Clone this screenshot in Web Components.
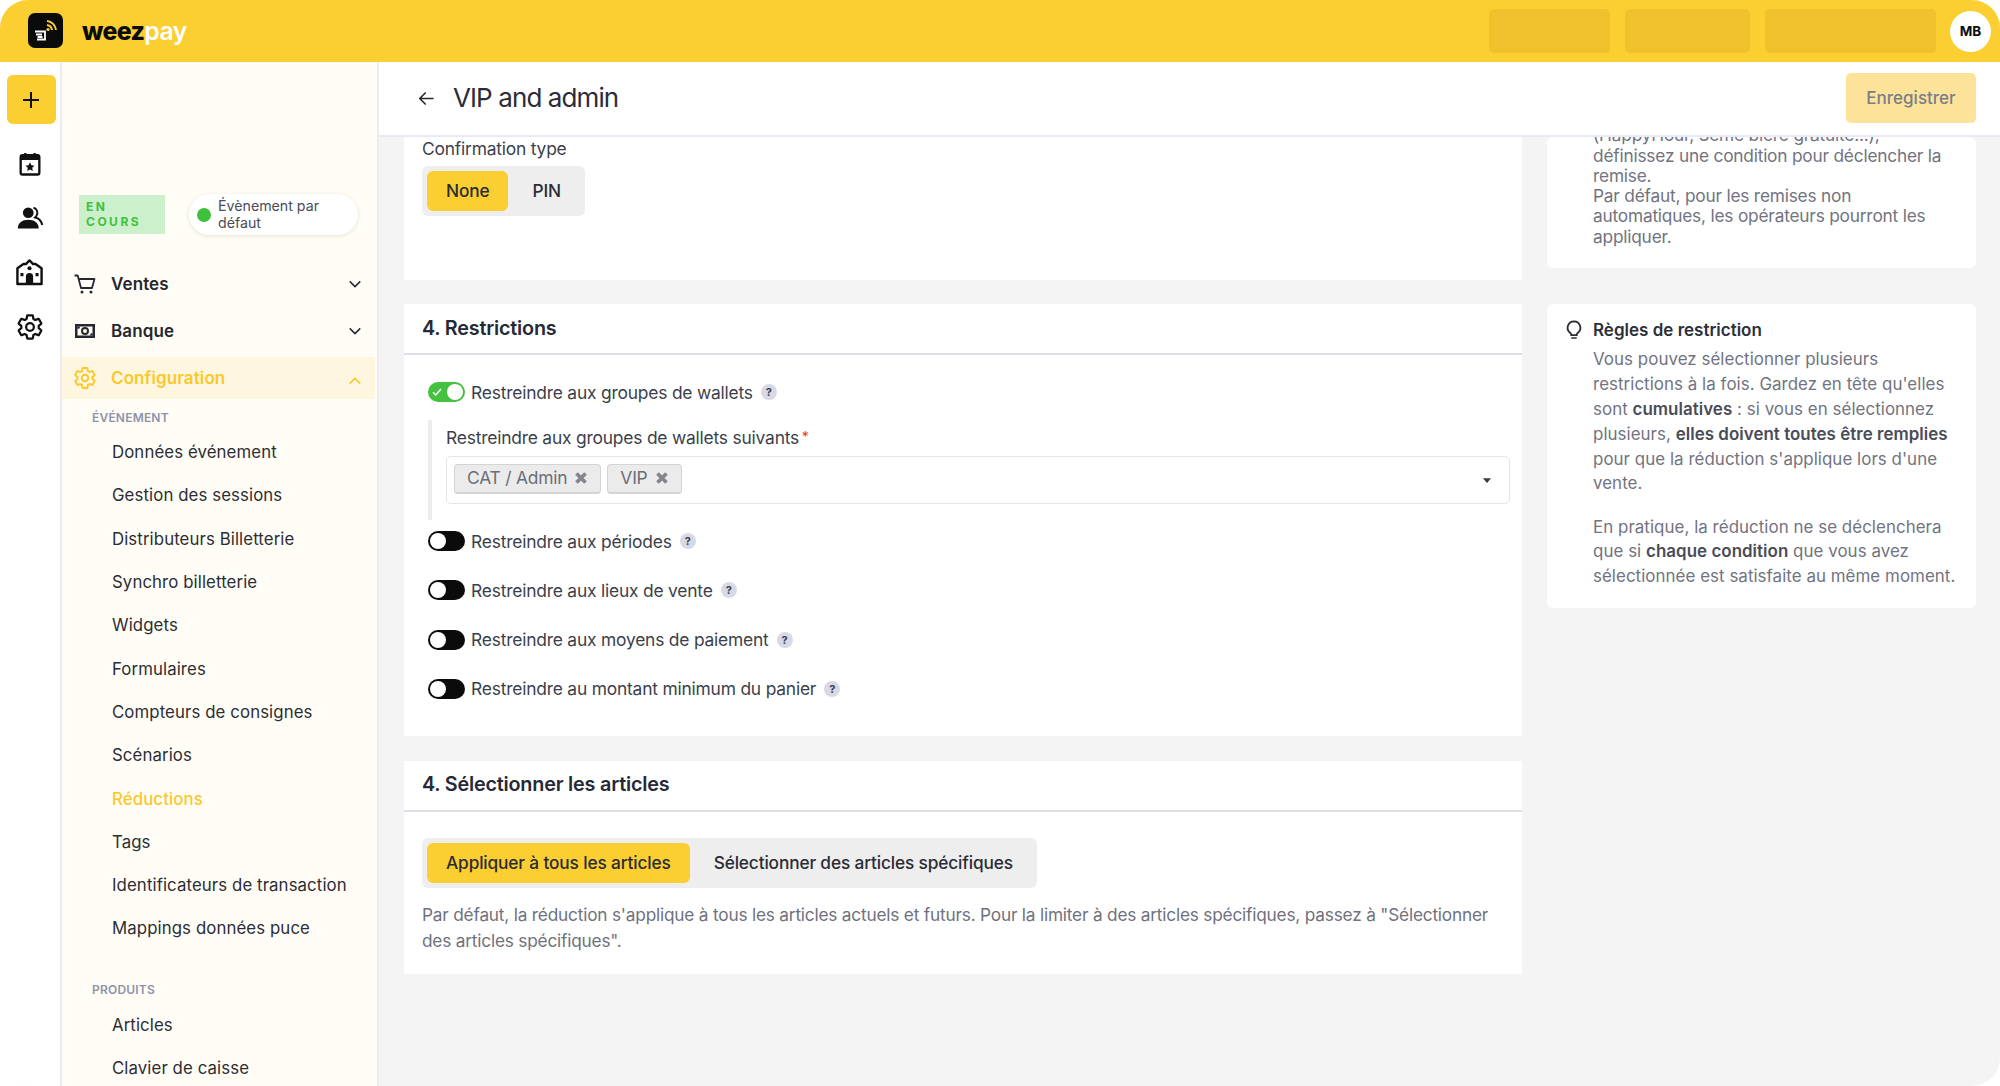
<!DOCTYPE html>
<html lang="fr">
<head>
<meta charset="utf-8">
<title>VIP and admin</title>
<style>
    html, body { margin: 0; padding: 0; background: #fff; }
    body { font-family: Inter, "Liberation Sans", sans-serif; color: #2c2f3a; overflow: hidden; }
</style>
</head>
<body>
<wz-app></wz-app>
<script>
/* weezpay admin: discount form. One file, elements defined top-down. */

const YELLOW = '#fbce32';

const ICONS = {
    plus: '<path d="M12 4v16M4 12h16" fill="none" stroke="currentColor" stroke-width="2"/>',
    calendar: '<rect x="4" y="4.5" width="16" height="16.5" rx="1.5" fill="none" stroke="currentColor" stroke-width="2"/><path d="M4 5h16v3.5H4z" fill="currentColor"/><path d="M8 2.5v3M16 2.5v3" stroke="currentColor" stroke-width="2"/><path d="M12 10.6l1.2 2.5 2.7.3-2 1.9.5 2.7-2.4-1.3-2.4 1.3.5-2.7-2-1.9 2.7-.3z" fill="currentColor"/>',
    people: '<circle cx="10.5" cy="7.5" r="4.6" fill="currentColor"/><path d="M1.5 21c0-5 4-7.5 9-7.5s9 2.5 9 7.5z" fill="currentColor"/><path d="M15 3.2c2.6.7 3.6 3.1 3.2 5.3-.2 1.3-.9 2.2-1.8 3 2.9.6 5.4 3.2 6.1 6.5" fill="none" stroke="currentColor" stroke-width="1.7"/>',
    venue: '<path d="M2 21.5V8.5L7 5h2l3-3 3 3h2l5 3.5v13z" fill="none" stroke="currentColor" stroke-width="2" stroke-linejoin="round"/><circle cx="12" cy="8.5" r="1.7" fill="currentColor"/><path d="M9 21.5v-6a3 3 0 0 1 6 0v6zM4.5 12.5H7V15H4.5zM17 12.5h2.5V15H17z" fill="currentColor"/>',
    gear: '<path d="M19.43 12.98c.04-.32.07-.64.07-.98s-.03-.66-.07-.98l2.11-1.65c.19-.15.24-.42.12-.64l-2-3.46c-.12-.22-.39-.3-.61-.22l-2.49 1c-.52-.4-1.08-.73-1.69-.98l-.38-2.65C14.46 2.18 14.25 2 14 2h-4c-.25 0-.46.18-.49.42l-.38 2.65c-.61.25-1.17.59-1.69.98l-2.49-1c-.23-.09-.49 0-.61.22l-2 3.46c-.13.22-.07.49.12.64l2.11 1.65c-.04.32-.07.65-.07.98s.03.66.07.98l-2.11 1.65c-.19.15-.24.42-.12.64l2 3.46c.12.22.39.3.61.22l2.49-1c.52.4 1.08.73 1.69.98l.38 2.65c.03.24.24.42.49.42h4c.25 0 .46-.18.49-.42l.38-2.65c.61-.25 1.17-.59 1.69-.98l2.49 1c.23.09.49 0 .61-.22l2-3.46c.12-.22.07-.49-.12-.64l-2.11-1.65z" fill="none" stroke="currentColor" stroke-width="1.9" stroke-linejoin="round"/><circle cx="12" cy="12" r="3.3" fill="none" stroke="currentColor" stroke-width="1.9"/>',
    cart: '<path d="M1.5 3.5h3.2L8 16h11l2.5-9H6" fill="none" stroke="currentColor" stroke-width="1.8" stroke-linejoin="round"/><circle cx="9" cy="20" r="1.5" fill="currentColor"/><circle cx="18" cy="20" r="1.5" fill="currentColor"/>',
    money: '<path d="M2 5h20v14H2z" fill="currentColor"/><path d="M4.5 7.5h15v9h-15z" fill="#fffdf5"/><circle cx="12" cy="12" r="3" fill="none" stroke="currentColor" stroke-width="2"/><path d="M4.5 7.5H7A2.5 2.5 0 0 1 4.5 10zM19.5 16.5H17a2.5 2.5 0 0 1 2.5-2.5z" fill="currentColor"/>',
    down: '<path d="M5 8.5l7 7 7-7" fill="none" stroke="currentColor" stroke-width="2"/>',
    up: '<path d="M5 15.5l7-7 7 7" fill="none" stroke="currentColor" stroke-width="2"/>',
    back: '<path d="M21 12H4M11 4.5L3.5 12l7.5 7.5" fill="none" stroke="currentColor" stroke-width="2"/>',
    bulb: '<path d="M12 2.5a7 7 0 0 0-4 12.7c.6.5 1 1.2 1 2v.3h6v-.3c0-.8.4-1.5 1-2a7 7 0 0 0-4-12.7z" fill="none" stroke="currentColor" stroke-width="2"/><path d="M9 20h6v1.5H9z" fill="currentColor"/>',
    cross: '<path d="M6 6l12 12M18 6L6 18" fill="none" stroke="currentColor" stroke-width="5"/>',
    caret: '<path d="M5 9h14l-7 8z" fill="currentColor"/>',
    check: '<path d="M4 12.5l5.5 5.5L20 6" fill="none" stroke="currentColor" stroke-width="3"/>',
};

class WzIcon extends HTMLElement {
    connectedCallback() {
        const size = this.getAttribute('size') || 24;
        this.attachShadow({ mode: 'open' }).innerHTML = `
            <style>:host { display: inline-flex; flex: none; width: ${size}px; height: ${size}px; } svg { width: 100%; height: 100%; display: block; }</style>
            <svg viewBox="0 0 24 24">${ICONS[this.getAttribute('name')]}</svg>`;
    }
}
customElements.define('wz-icon', WzIcon);

class WzTopbar extends HTMLElement {
    constructor() {
        super();
        this.attachShadow({ mode: 'open' }).innerHTML = `
            <style>
                :host { display: flex; align-items: center; height: 62px; flex: none; background: ${YELLOW}; padding: 0 9px 0 28px; box-sizing: border-box; }
                .logo { width: 35px; height: 35px; margin-top: -1px; border-radius: 7px; background: #0b0b0b; display: block; flex: none; }
                .brand { margin-left: 19px; font: 800 24.8px Inter, sans-serif; letter-spacing: -.6px; color: #0b0b0b; }
                .brand span { color: #fff; font-weight: 600; }
                .gap { flex: 1; }
                .ghost { height: 44px; border-radius: 5px; background: #f0c12d; margin-right: 15px; flex: none; }
                .avatar { width: 41px; height: 41px; margin-left: -1px; border-radius: 50%; background: #fff; color: #0b0b0b; font: 700 13.5px Inter, sans-serif; display: flex; align-items: center; justify-content: center; }
            </style>
            <svg class="logo" viewBox="0 0 35 35">
                <g fill="none" stroke="${YELLOW}" stroke-width="2">
                    <path d="M19 12a6 6 0 0 1 5 5"/><path d="M19 8a10 10 0 0 1 9 9"/>
                </g>
                <circle cx="20" cy="16.5" r="1.6" fill="${YELLOW}"/>
                <g fill="none" stroke="#fff" stroke-width="1.8">
                    <path d="M7 18.5h10v8H9M8 21.5h6M9.5 24h5"/>
                </g>
            </svg>
            <div class="brand">weez<span>pay</span></div>
            <div class="gap"></div>
            <div class="ghost" style="width:121px"></div>
            <div class="ghost" style="width:125px"></div>
            <div class="ghost" style="width:171px"></div>
            <div class="avatar">MB</div>`;
    }
}
customElements.define('wz-topbar', WzTopbar);

class WzRail extends HTMLElement {
    constructor() {
        super();
        this.attachShadow({ mode: 'open' }).innerHTML = `
            <style>
                :host { display: flex; flex-direction: column; align-items: center; width: 62px; flex: none; box-sizing: border-box; border-right: 2px solid #ecebee; padding-top: 13px; background: #fff; color: #111; }
                .add { width: 49px; height: 49px; border-radius: 6px; background: ${YELLOW}; display: flex; align-items: center; justify-content: center; margin: 0 -1px 26px 1px; }
                wz-icon { margin-bottom: 26px; margin-right: 1px; }
            </style>
            <div class="add"><wz-icon name="plus" size="24" style="margin:0"></wz-icon></div>
            <wz-icon name="calendar" size="28"></wz-icon>
            <wz-icon name="people" size="28"></wz-icon>
            <wz-icon name="venue" size="29"></wz-icon>
            <wz-icon name="gear" size="28"></wz-icon>`;
    }
}
customElements.define('wz-rail', WzRail);

class WzNavGroup extends HTMLElement {
    connectedCallback() {
        const active = this.hasAttribute('active');
        this.attachShadow({ mode: 'open' }).innerHTML = `
            <style>
                :host { display: flex; align-items: center; height: 42px; margin-right: 2px; padding: 0 11px 0 11px; box-sizing: border-box; font: 600 17px Inter, sans-serif; letter-spacing: .1px; color: ${active ? '#fbc82a' : '#26272f'}; background: ${active ? '#fff6e0' : 'transparent'}; }
                .label { margin-left: 14px; flex: 1; }
            </style>
            <wz-icon name="${this.getAttribute('icon')}" size="24"></wz-icon>
            <span class="label"><slot></slot></span>
            <wz-icon name="${active ? 'up' : 'down'}" size="18" style="${active ? 'margin-top:5px' : ''}"></wz-icon>`;
    }
}
customElements.define('wz-nav-group', WzNavGroup);

class WzNavLink extends HTMLElement {
    connectedCallback() {
        const on = this.hasAttribute('active');
        this.attachShadow({ mode: 'open' }).innerHTML = `
            <style>
                :host { display: flex; align-items: center; height: 43.3px; padding-left: 50px; font: ${on ? 500 : 400} 16.8px Inter, sans-serif; letter-spacing: .1px; color: ${on ? '#fbc82a' : '#2b2d36'}; }
            </style>
            <slot></slot>`;
    }
}
customElements.define('wz-nav-link', WzNavLink);

class WzNavTitle extends HTMLElement {
    constructor() {
        super();
        this.attachShadow({ mode: 'open' }).innerHTML = `
            <style>:host { display: block; padding-left: 30px; font: 600 12px/16px Inter, sans-serif; color: #8f92aa; letter-spacing: .2px; text-transform: uppercase; }</style>
            <slot></slot>`;
    }
}
customElements.define('wz-nav-title', WzNavTitle);

class WzSidebar extends HTMLElement {
    constructor() {
        super();
        this.attachShadow({ mode: 'open' }).innerHTML = `
            <style>
                :host { display: flex; flex-direction: column; width: 317px; flex: none; box-sizing: border-box; background: #fffdf5; border-right: 2px solid #ecebee; overflow: hidden; position: relative; }
                .status { display: flex; align-items: center; gap: 24px; margin: 132px 0 0 17px; height: 41px; }
                .badge { width: 86px; height: 39px; box-sizing: border-box; background: #cbf0cb; color: #3fc13b; font: 700 12px/15px Inter, sans-serif; letter-spacing: 2.5px; padding: 4px 7px; flex: none; }
                .chip { width: 169px; height: 41px; box-sizing: border-box; background: #fff; border-radius: 21px; box-shadow: 0 1px 4px rgba(70,60,20,.14); display: flex; align-items: center; gap: 7px; padding: 0 8px; font: 400 14.2px/16.5px Inter, sans-serif; color: #4a4c57; }
                .dot { width: 14px; height: 14px; border-radius: 50%; background: #3fc13b; flex: none; }
                .groups { margin-top: 28px; display: flex; flex-direction: column; gap: 5px; }
                .scroll { position: absolute; top: 0; right: -2px; width: 2px; height: 541px; background: #a9a9ae; }
                hr { border: 0; height: 2px; background: #dcdce6; margin: 4px 12px 28px 30px; }
            </style>
            <div class="status">
                <div class="badge">EN COURS</div>
                <div class="chip"><span class="dot"></span><span>Évènement par défaut</span></div>
            </div>
            <div class="groups">
                <wz-nav-group icon="cart">Ventes</wz-nav-group>
                <wz-nav-group icon="money">Banque</wz-nav-group>
                <wz-nav-group icon="gear" active>Configuration</wz-nav-group>
            </div>
            <wz-nav-title style="margin-top:10.5px">Événement</wz-nav-title>
            <div style="margin-top:5px">
                <wz-nav-link>Données événement</wz-nav-link>
                <wz-nav-link>Gestion des sessions</wz-nav-link>
                <wz-nav-link>Distributeurs Billetterie</wz-nav-link>
                <wz-nav-link>Synchro billetterie</wz-nav-link>
                <wz-nav-link>Widgets</wz-nav-link>
                <wz-nav-link>Formulaires</wz-nav-link>
                <wz-nav-link>Compteurs de consignes</wz-nav-link>
                <wz-nav-link>Scénarios</wz-nav-link>
                <wz-nav-link active>Réductions</wz-nav-link>
                <wz-nav-link>Tags</wz-nav-link>
                <wz-nav-link>Identificateurs de transaction</wz-nav-link>
                <wz-nav-link>Mappings données puce</wz-nav-link>
            </div>
            <hr>
            <wz-nav-title>Produits</wz-nav-title>
            <div style="margin-top:5px">
                <wz-nav-link>Articles</wz-nav-link>
                <wz-nav-link>Clavier de caisse</wz-nav-link>
            </div>
            <div class="scroll"></div>`;
    }
}
customElements.define('wz-sidebar', WzSidebar);

class WzPageHeader extends HTMLElement {
    connectedCallback() {
        this.attachShadow({ mode: 'open' }).innerHTML = `
            <style>
                :host { display: flex; align-items: center; height: 75px; flex: none; box-sizing: border-box; background: #fff; border-bottom: 2px solid #e9e9f6; padding: 0 24px 0 38px; position: relative; z-index: 1; }
                h1 { margin: 0 0 2px 17px; font: 400 26px Inter, sans-serif; letter-spacing: -.9px; color: #2a2d38; flex: 1; }
                button { width: 130px; height: 50px; margin-top: -1px; border: 0; border-radius: 5px; background: #fde39a; font: 500 17px Inter, sans-serif; color: #7a7d88; }
                wz-icon { color: #26272f; }
            </style>
            <wz-icon name="back" size="19"></wz-icon>
            <h1>${this.getAttribute('title')}</h1>
            <button>Enregistrer</button>`;
    }
}
customElements.define('wz-page-header', WzPageHeader);

class WzCard extends HTMLElement {
    connectedCallback() {
        const heading = this.getAttribute('heading');
        this.attachShadow({ mode: 'open' }).innerHTML = `
            <style>
                :host { display: block; background: #fff; flex: none; }
                header { height: 51px; box-sizing: border-box; border-bottom: 2px solid #dedeea; padding: 0 18px 2px; display: flex; align-items: center; font: 600 19.8px Inter, sans-serif; letter-spacing: -.2px; color: #262936; }
            </style>
            ${heading ? `<header>${heading}</header>` : ''}
            <slot></slot>`;
    }
}
customElements.define('wz-card', WzCard);

class WzSegmented extends HTMLElement {
    connectedCallback() {
        const options = this.getAttribute('options').split('|');
        this.attachShadow({ mode: 'open' }).innerHTML = `
            <style>
                :host { display: inline-flex; height: 50px; box-sizing: border-box; padding: 5px; gap: 5px; border-radius: 6px; background: #eeeeef; }
                span { display: flex; align-items: center; padding: 0 19px 1px; border-radius: 6px; font: 500 17.3px Inter, sans-serif; letter-spacing: -.15px; color: #2a2c35; }
                span.on { background: ${YELLOW}; }
            </style>
            ${options.map((o, i) => `<span class="${i === 0 ? 'on' : ''}">${o}</span>`).join('')}`;
    }
}
customElements.define('wz-segmented', WzSegmented);

class WzHelp extends HTMLElement {
    constructor() {
        super();
        this.attachShadow({ mode: 'open' }).innerHTML = `
            <style>:host { display: inline-flex; align-items: center; justify-content: center; width: 16px; height: 16px; border-radius: 50%; background: #d8d9e6; font: 700 11px Inter, sans-serif; color: #3b3d4c; flex: none; }</style>
            ?`;
    }
}
customElements.define('wz-help', WzHelp);

class WzToggle extends HTMLElement {
    connectedCallback() {
        const on = this.hasAttribute('on');
        this.attachShadow({ mode: 'open' }).innerHTML = `
            <style>
                :host { display: flex; align-items: center; font: 400 17.4px Inter, sans-serif; letter-spacing: -.2px; color: #3c3f4b; }
                .track { width: 37px; height: 20px; box-sizing: border-box; border-radius: 10px; background: ${on ? '#44c23f' : '#0b0b0b'}; display: flex; align-items: center; justify-content: ${on ? 'flex-end' : 'flex-start'}; padding: 0 2px; margin-right: 6px; position: relative; color: #fff; flex: none; }
                .knob { width: 16px; height: 16px; border-radius: 50%; background: #fff; }
                wz-icon { position: absolute; left: 3px; top: 4px; }
                wz-help { margin-left: 8px; }
            </style>
            <span class="track">${on ? '<wz-icon name="check" size="12"></wz-icon>' : ''}<span class="knob"></span></span>
            <span><slot></slot></span>
            <wz-help></wz-help>`;
    }
}
customElements.define('wz-toggle', WzToggle);

class WzTag extends HTMLElement {
    constructor() {
        super();
        this.attachShadow({ mode: 'open' }).innerHTML = `
            <style>
                :host { display: inline-flex; align-items: center; height: 30px; margin-top: -3px; box-sizing: border-box; padding: 0 10px 1px 12px; gap: 5px; border: 1px solid #d4d4d6; border-bottom-width: 2px; border-radius: 4px; background: #ebebec; font: 400 17.4px Inter, sans-serif; letter-spacing: -.2px; color: #6c6e76; }
                wz-icon { color: #85868c; }
            </style>
            <slot></slot><wz-icon name="cross" size="18"></wz-icon>`;
    }
}
customElements.define('wz-tag', WzTag);

class WzSelect extends HTMLElement {
    constructor() {
        super();
        this.attachShadow({ mode: 'open' }).innerHTML = `
            <style>
                :host { display: flex; align-items: center; height: 48px; box-sizing: border-box; padding: 0 15px 0 7px; gap: 6px; border: 1px solid #e4e4ea; border-radius: 5px; background: #fff; }
                .sp { flex: 1; }
                wz-icon { color: #3a3a40; }
            </style>
            <slot></slot><span class="sp"></span><wz-icon name="caret" size="14"></wz-icon>`;
    }
}
customElements.define('wz-select', WzSelect);

class WzTip extends HTMLElement {
    connectedCallback() {
        const title = this.getAttribute('heading');
        this.attachShadow({ mode: 'open' }).innerHTML = `
            <style>
                :host { display: flex; flex-direction: column; justify-content: flex-end; overflow: hidden; background: #fff; border-radius: 6px; box-sizing: border-box; padding: 0 20px ${title ? 19 : 21}px 46px; position: relative; flex: none; font: 400 17.3px/20.3px Inter, sans-serif; letter-spacing: -.2px; color: #71737f; }
                h4 { margin: 0 0 5px; font: 600 17px/24px Inter, sans-serif; letter-spacing: 0; color: #2d2f3a; }
                wz-icon { position: absolute; left: 16px; top: 15px; color: #2a2c35; }
            </style>
            ${title ? `<wz-icon name="bulb" size="22"></wz-icon><h4>${title}</h4>` : ''}
            <div><slot></slot></div>`;
    }
}
customElements.define('wz-tip', WzTip);

class WzApp extends HTMLElement {
    constructor() {
        super();
        this.attachShadow({ mode: 'open' }).innerHTML = `
            <style>
                :host { display: flex; flex-direction: column; width: 2000px; height: 1086px; overflow: hidden; border-radius: 28px; background: #f4f4f5; }
                .shell { flex: 1; display: flex; min-height: 0; }
                main { flex: 1; display: flex; flex-direction: column; min-width: 0; }
                .scroller { flex: 1; display: flex; gap: 25px; padding: 0 24px 0 25px; min-height: 0; overflow: hidden; }
                .left { width: 1118px; flex: none; display: flex; flex-direction: column; gap: 24.5px; }
                .right { flex: 1; display: flex; flex-direction: column; gap: 36px; }
                .pad { padding: 0 18px; }
                label { display: block; font: 400 17.4px/24px Inter, sans-serif; letter-spacing: -.2px; color: #3c3f4b; }
                .first { height: 142.5px; box-sizing: border-box; }
                .first wz-segmented { margin-top: 5px; }
                .rows { padding: 27px 12px 0 24px; height: 381px; box-sizing: border-box; display: flex; flex-direction: column; }
                .nested { margin: 18px 0 11px; border-left: 4px solid #ededee; padding: 5px 0 16px 14px; }
                .nested label { margin-bottom: 6px; }
                .nested i { color: #e8323c; font-style: normal; font-size: 14px; vertical-align: 2px; margin-left: -2px; }
                .rows wz-toggle { height: 20px; margin-bottom: 29.3px; }
                .rows wz-toggle.lead { margin-bottom: 0; }
                .articles { padding: 26px 18px 0; height: 162px; box-sizing: border-box; }
                .articles p { margin: 14.5px 0 0; font: 400 17.25px/25.5px Inter, sans-serif; letter-spacing: -.2px; color: #6f717d; }
                b { font-weight: 600; color: #4a4c58; }
                .r2 { line-height: 24.8px; font-size: 16.9px; letter-spacing: .05px; }
                .r2 p { margin: 0; }
                .r2 p + p { margin-top: 18.5px; }
            </style>
            <wz-topbar></wz-topbar>
            <div class="shell">
                <wz-rail></wz-rail>
                <wz-sidebar></wz-sidebar>
                <main>
                    <wz-page-header title="VIP and admin"></wz-page-header>
                    <div class="scroller">
                        <div class="left">
                            <wz-card class="first">
                                <div class="pad">
                                    <label>Confirmation type</label>
                                    <wz-segmented options="None|PIN"></wz-segmented>
                                </div>
                            </wz-card>
                            <wz-card heading="4. Restrictions">
                                <div class="rows">
                                    <wz-toggle on class="lead">Restreindre aux groupes de wallets</wz-toggle>
                                    <div class="nested">
                                        <label>Restreindre aux groupes de wallets suivants <i>*</i></label>
                                        <wz-select><wz-tag>CAT / Admin</wz-tag><wz-tag>VIP</wz-tag></wz-select>
                                    </div>
                                    <wz-toggle>Restreindre aux périodes</wz-toggle>
                                    <wz-toggle>Restreindre aux lieux de vente</wz-toggle>
                                    <wz-toggle>Restreindre aux moyens de paiement</wz-toggle>
                                    <wz-toggle>Restreindre au montant minimum du panier</wz-toggle>
                                </div>
                            </wz-card>
                            <wz-card heading="4. Sélectionner les articles">
                                <div class="articles">
                                    <wz-segmented options="Appliquer à tous les articles|Sélectionner des articles spécifiques"></wz-segmented>
                                    <p>Par défaut, la réduction s'applique à tous les articles actuels et futurs. Pour la limiter à des articles spécifiques, passez à "Sélectionner des articles spécifiques".</p>
                                </div>
                            </wz-card>
                        </div>
                        <div class="right">
                            <wz-tip style="height:131px">(HappyHour, 3ème bière gratuite...), définissez une condition pour déclencher la remise.<br>Par défaut, pour les remises non automatiques, les opérateurs pourront les appliquer.</wz-tip>
                            <wz-tip heading="Règles de restriction" style="height:304px">
                                <div class="r2"><p>Vous pouvez sélectionner plusieurs restrictions à la fois. Gardez en tête qu'elles sont <b>cumulatives</b> : si vous en sélectionnez plusieurs, <b>elles doivent toutes être remplies</b> pour que la réduction s'applique lors d'une vente.</p><p>En pratique, la réduction ne se déclenchera que si <b>chaque condition</b> que vous avez sélectionnée est satisfaite au même moment.</p></div>
                            </wz-tip>
                        </div>
                    </div>
                </main>
            </div>`;
    }
}
customElements.define('wz-app', WzApp);
</script>
</body>
</html>
